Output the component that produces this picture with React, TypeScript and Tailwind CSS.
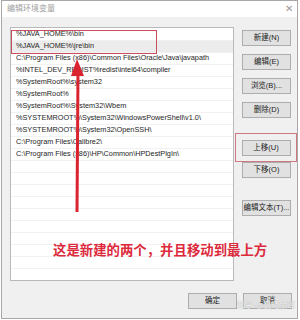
const items = [
  '%JAVA_HOME%\\bin',
  '%JAVA_HOME%\\jre\\bin',
  'C:\\Program Files (x86)\\Common Files\\Oracle\\Java\\javapath',
  '%INTEL_DEV_REDIST%redist\\intel64\\compiler',
  '%SystemRoot%\\system32',
  '%SystemRoot%',
  '%SystemRoot%\\System32\\Wbem',
  '%SYSTEMROOT%\\System32\\WindowsPowerShell\\v1.0\\',
  '%SYSTEMROOT%\\System32\\OpenSSH\\',
  'C:\\Program Files\\Calibre2\\',
  'C:\\Program Files (x86)\\HP\\Common\\HPDestPlgIn\\',
];

const font = { fontFamily: '"Liberation Sans", "Noto Sans CJK SC", sans-serif' };

function Btn({ label, className = '' }: { label: string; className?: string }) {
  return (
    <div
      className={`w-[49px] h-[16px] flex items-center justify-center bg-[#e1e1e1] border border-[#adadad] text-[7.5px] text-[#222] whitespace-nowrap ${className}`}
    >
      {label}
    </div>
  );
}

export default function App() {
  const rows = [...items, ...Array(10).fill('')];
  return (
    <div className="relative w-[300px] h-[320px] bg-white overflow-hidden" style={font}>
      <div className="absolute left-[1px] top-0 w-[297px] h-[319px] border border-[#a8a8a8] bg-[#f0f0f0] flex flex-col">
        {/* title bar */}
        <div className="h-[16px] bg-white flex items-center justify-between pl-[5px] pr-[4px]">
          <span className="text-[8px] text-[#a0a0a0]">编辑环境变量</span>
          <span className="text-[10px] text-[#9a9a9a] leading-none">✕</span>
        </div>

        <div className="flex pl-[8px] pt-[10px]">
          {/* list */}
          <div className="relative w-[225px] h-[254px] bg-white border border-[#b9b9b9] pt-[1px] overflow-hidden">
            {rows.map((t, i) => (
              <div
                key={i}
                className={`h-[12px] pl-[5px] flex items-center text-[7.3px] text-[#1e1e1e] whitespace-nowrap border-b border-[#f2f2f2] ${
                  i === 1 ? 'bg-[#ececec]' : ''
                }`}
              >
                {t}
              </div>
            ))}
            <div className="absolute left-[0px] top-[2px] w-[146px] h-[24px] border border-[#c8505c]" />
          </div>

          {/* right buttons */}
          <div className="flex flex-col ml-[8px] pt-[3px]">
            <Btn label="新建(N)" />
            <Btn label="编辑(E)" className="mt-[8px]" />
            <Btn label="浏览(B)..." className="mt-[8px]" />
            <Btn label="删除(D)" className="mt-[8px]" />
            <div className="mt-[15px] -ml-[7px] w-[62px] h-[29px] border border-[#d07880] flex items-center justify-center">
              <Btn label="上移(U)" />
            </div>
            <Btn label="下移(O)" />
            <Btn label="编辑文本(T)..." className="mt-[22px]" />
          </div>
        </div>

        {/* bottom buttons */}
        <div className="flex justify-end gap-[6px] pr-[5px] mt-[12px]">
          <Btn label="确定" />
          <Btn label="取消" />
        </div>
      </div>

      {/* annotation */}
      <svg className="absolute left-0 top-0" width="300" height="320">
        <line x1="78" y1="72" x2="77" y2="212" stroke="#d9232e" strokeWidth="3" />
        <polygon points="77,59 71,76 84,76" fill="#d9232e" />
      </svg>
      <div
        className="absolute left-[53px] top-[243px] text-[13.4px] font-bold text-[#dc2a3c] whitespace-nowrap leading-none"
        style={{ fontFamily: '"Noto Sans CJK SC", sans-serif' }}
      >
        这是新建的两个，并且移动到最上方
      </div>
      <div
        className="absolute left-[237px] top-[302px] text-[8px] leading-none text-white/90 whitespace-nowrap"
        style={{ textShadow: '0 0 1px #888' }}
      >
        知乎 @晨曦余晖
      </div>
    </div>
  );
}
